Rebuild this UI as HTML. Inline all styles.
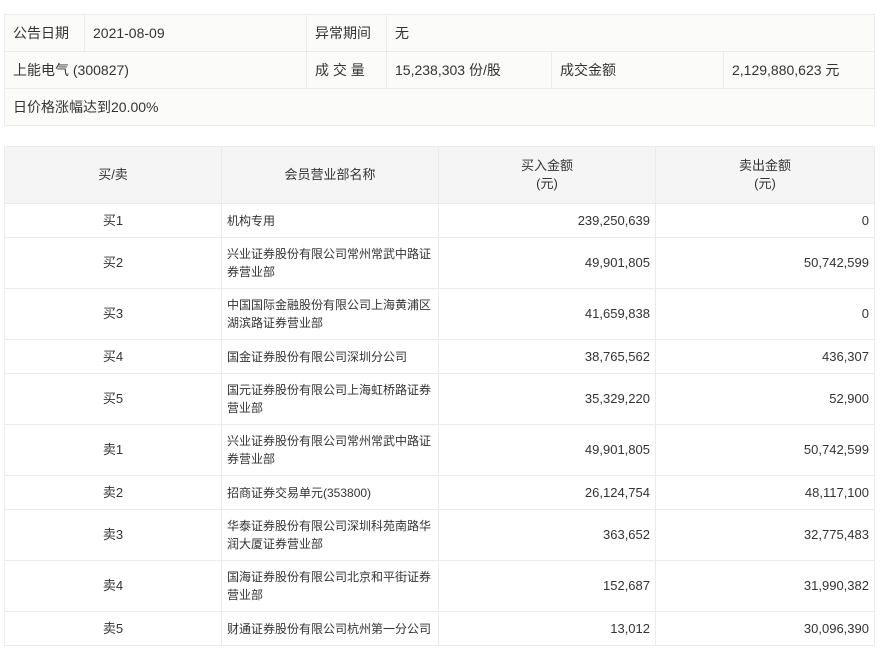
<!DOCTYPE html>
<html><head><meta charset="utf-8"><style>
body{margin:0;background:#fff;font-family:"Liberation Sans","Noto Sans CJK SC",sans-serif;font-size:13px;color:#333;}
table{border-collapse:collapse;position:absolute;left:4px;table-layout:fixed;}
td,th{border:1px solid #ebebeb;padding:0 8px;font-weight:normal;line-height:18px;}
#t1{top:14px;width:870px;background:#fbfbf9;}
#t1 td{height:36px;font-size:14px;}
#t2{top:146px;width:870px;}
#t2 th{background:#f5f5f5;height:56px;text-align:center;}
#t2 td{height:33px;}
#t2 tr.d td{height:50px;}
.c{text-align:center}.r{text-align:right}
#t2 td.r{padding-right:5px}
#t2 td:nth-child(2){font-size:12px;padding:0 1px 0 5px}
</style></head><body>
<table id="t1">
<colgroup><col style="width:80px"><col style="width:222px"><col style="width:80px"><col style="width:165px"><col style="width:172px"><col style="width:151px"></colgroup>
<tr><td>公告日期</td><td>2021-08-09</td><td>异常期间</td><td colspan="3">无</td></tr>
<tr><td colspan="2">上能电气 (300827)</td><td>成 交 量</td><td>15,238,303 份/股</td><td>成交金额</td><td>2,129,880,623 元</td></tr>
<tr><td colspan="6">日价格涨幅达到20.00%</td></tr>
</table>
<table id="t2">
<colgroup><col style="width:217px"><col style="width:217px"><col style="width:217px"><col style="width:219px"></colgroup>
<tr><th>买/卖</th><th>会员营业部名称</th><th>买入金额<br>(元)</th><th>卖出金额<br>(元)</th></tr>
<tr><td class="c">买1</td><td>机构专用</td><td class="r">239,250,639</td><td class="r">0</td></tr>
<tr class="d"><td class="c">买2</td><td>兴业证券股份有限公司常州常武中路证<br>券营业部</td><td class="r">49,901,805</td><td class="r">50,742,599</td></tr>
<tr class="d"><td class="c">买3</td><td>中国国际金融股份有限公司上海黄浦区<br>湖滨路证券营业部</td><td class="r">41,659,838</td><td class="r">0</td></tr>
<tr><td class="c">买4</td><td>国金证券股份有限公司深圳分公司</td><td class="r">38,765,562</td><td class="r">436,307</td></tr>
<tr class="d"><td class="c">买5</td><td>国元证券股份有限公司上海虹桥路证券<br>营业部</td><td class="r">35,329,220</td><td class="r">52,900</td></tr>
<tr class="d"><td class="c">卖1</td><td>兴业证券股份有限公司常州常武中路证<br>券营业部</td><td class="r">49,901,805</td><td class="r">50,742,599</td></tr>
<tr><td class="c">卖2</td><td>招商证券交易单元(353800)</td><td class="r">26,124,754</td><td class="r">48,117,100</td></tr>
<tr class="d"><td class="c">卖3</td><td>华泰证券股份有限公司深圳科苑南路华<br>润大厦证券营业部</td><td class="r">363,652</td><td class="r">32,775,483</td></tr>
<tr class="d"><td class="c">卖4</td><td>国海证券股份有限公司北京和平街证券<br>营业部</td><td class="r">152,687</td><td class="r">31,990,382</td></tr>
<tr><td class="c">卖5</td><td style="white-space:nowrap">财通证券股份有限公司杭州第一分公司</td><td class="r">13,012</td><td class="r">30,096,390</td></tr>
</table>
</body></html>
